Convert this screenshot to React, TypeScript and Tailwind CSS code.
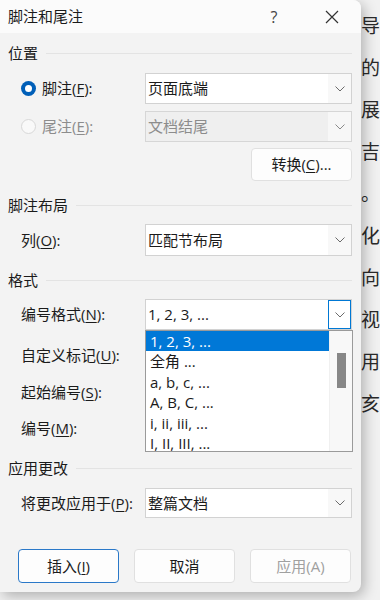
import React from "react";

const FONT = { fontFamily: '"Open Sans", "Noto Sans CJK SC", sans-serif' };

function Chevron({ color = "#6b6b6b" }: { color?: string }) {
  return (
    <svg width="10" height="6" viewBox="0 0 10 6" fill="none">
      <path d="M0.5 0.5 L5 5 L9.5 0.5" stroke={color} strokeWidth="1" />
    </svg>
  );
}

function Select({
  value,
  disabled,
  focused,
}: {
  value: string;
  disabled?: boolean;
  focused?: boolean;
}) {
  return (
    <div
      className={`flex h-full w-[207px] border ${
        disabled
          ? "border-[#d6d6d6] bg-[#efefef] text-[#8c8c8c]"
          : "border-[#d2d2d2] bg-white text-[#1b1b1b]"
      }`}
    >
      <div className="flex flex-1 items-center pl-[2px]">{value}</div>
      <div
        className={`flex w-[23px] items-center justify-center ${
          focused ? "border border-[#0078d4] bg-white" : disabled ? "bg-[#f7f7f7]" : "bg-[#f8f8f8]"
        }`}
      >
        <Chevron color={disabled ? "#8a8a8a" : "#6b6b6b"} />
      </div>
    </div>
  );
}

function Heading({ text }: { text: string }) {
  return (
    <div className="flex h-[20px] items-center text-[#1b1b1b]">
      <span>{text}</span>
      <div className="ml-[8px] h-px flex-1 bg-[#e3e3e3]" />
    </div>
  );
}

function Label({ children }: { children: React.ReactNode }) {
  return <div className="flex w-[124px] items-center">{children}</div>;
}

function U({ children }: { children: React.ReactNode }) {
  return <span className="underline underline-offset-[2px] decoration-1">{children}</span>;
}

function Button({
  children,
  primary,
  disabled,
}: {
  children: React.ReactNode;
  primary?: boolean;
  disabled?: boolean;
}) {
  return (
    <div
      className={`flex h-full w-[101px] items-center justify-center rounded-[4px] border bg-[#fdfdfd] ${
        primary ? "border-[#2a78c8]" : "border-[#e0e0e0]"
      } ${disabled ? "text-[#a0a0a0]" : "text-[#1b1b1b]"}`}
    >
      {children}
    </div>
  );
}

const docLines = ["导", "的", "展", "吉", "。", "化", "向", "视", "用", "亥"];

export default function App() {
  const items = ["1, 2, 3, ...", "全角 ...", "a, b, c, ...", "A, B, C, ...", "i, ii, iii, ...", "I, II, III, ..."];
  return (
    <div className="relative h-[600px] w-[380px] overflow-hidden bg-[#f1f1f1]" style={FONT}>
      {/* document behind */}
      <div
        className="flex flex-col pl-[361px] pt-[4px] text-[19px] leading-[42px] text-[#2a2a2a]"
        style={{ fontFamily: '"Noto Sans CJK SC", sans-serif' }}
      >
        {docLines.map((l, i) => (
          <div key={i} className="whitespace-nowrap">
            {l}
          </div>
        ))}
      </div>

      {/* dialog */}
      <div className="absolute left-0 top-0 flex h-[592px] w-[361px] flex-col overflow-hidden rounded-r-[8px] bg-[#f3f3f3] text-[15px] text-[#1b1b1b] shadow-[3px_4px_14px_rgba(0,0,0,0.28)]">
        {/* title bar */}
        <div className="flex h-[33px] shrink-0 items-center bg-[#fbfbfb] pl-[8px] pr-[9px]">
          <span className="text-[15px]">脚注和尾注</span>
          <div className="flex-1" />
          <div className="flex w-[40px] items-center justify-center text-[16px] text-[#444]">?</div>
          <div className="w-[18px]" />
          <div className="flex w-[40px] items-center justify-center">
            <svg width="14" height="14" viewBox="0 0 14 14">
              <path d="M1 1 L13 13 M13 1 L1 13" stroke="#333" strokeWidth="1.2" />
            </svg>
          </div>
        </div>

        {/* body */}
        <div className="relative flex flex-1 flex-col pl-[8px] pr-[9px]">
          <div className="mt-[10px]">
            <Heading text="位置" />
          </div>

          <div className="mt-[10px] flex h-[31px] pl-[13px]">
            <Label>
              <div className="flex h-[15px] w-[15px] items-center justify-center rounded-full bg-[#005fb8]">
                <div className="h-[7px] w-[7px] rounded-full bg-white" />
              </div>
              <span className="ml-[6px]">
                脚注(<U>F</U>):
              </span>
            </Label>
            <Select value="页面底端" />
          </div>

          <div className="mt-[7px] flex h-[31px] pl-[13px] text-[#8c8c8c]">
            <Label>
              <div className="h-[15px] w-[15px] rounded-full border border-[#d8d8d8] bg-[#f9f9f9]" />
              <span className="ml-[6px]">
                尾注(<U>E</U>):
              </span>
            </Label>
            <Select value="文档结尾" disabled />
          </div>

          <div className="mt-[6px] flex h-[33px] justify-end">
            <Button>
              转换(<U>C</U>)...
            </Button>
          </div>

          <div className="mt-[14px]">
            <Heading text="脚注布局" />
          </div>

          <div className="mt-[9px] flex h-[32px] pl-[13px]">
            <Label>
              列(<U>O</U>):
            </Label>
            <Select value="匹配节布局" />
          </div>

          <div className="mt-[14px]">
            <Heading text="格式" />
          </div>

          <div className="mt-[9px] flex h-[31px] pl-[13px]">
            <Label>
              编号格式(<U>N</U>):
            </Label>
            <Select value="1, 2, 3, ..." focused />
          </div>

          <div className="mt-[10px] flex h-[31px] pl-[13px]">
            <Label>
              自定义标记(<U>U</U>):
            </Label>
          </div>
          <div className="mt-[6px] flex h-[30px] pl-[13px]">
            <Label>
              起始编号(<U>S</U>):
            </Label>
          </div>
          <div className="mt-[6px] flex h-[30px] pl-[13px]">
            <Label>
              编号(<U>M</U>):
            </Label>
          </div>

          <div className="mt-[15px]">
            <Heading text="应用更改" />
          </div>

          <div className="mt-[10px] flex h-[30px] pl-[13px]">
            <Label>
              将更改应用于(<U>P</U>):
            </Label>
            <Select value="整篇文档" />
          </div>

          <div className="mt-[31px] flex h-[34px] gap-[15px] pl-[10px]">
            <Button primary>
              插入(<U>I</U>)
            </Button>
            <Button>取消</Button>
            <Button disabled>应用(A)</Button>
          </div>

          {/* dropdown list overlay */}
          <div className="absolute left-[145px] top-[297px] flex h-[122px] w-[208px] border border-[#9a9a9a] bg-white">
            <div className="flex flex-1 flex-col">
              {items.map((it, i) => (
                <div
                  key={i}
                  className={`flex h-[20.4px] items-center pl-[4px] ${
                    i === 0 ? "bg-[#0078d7] text-white" : "text-[#1b1b1b]"
                  }`}
                >
                  {it}
                </div>
              ))}
            </div>
            <div className="relative w-[23px] border-l border-[#f0f0f0] bg-[#f8f8f8]">
              <div className="absolute left-[7px] top-[22px] h-[35px] w-[9px] bg-[#878787]" />
            </div>
          </div>
        </div>
      </div>
    </div>
  );
}
